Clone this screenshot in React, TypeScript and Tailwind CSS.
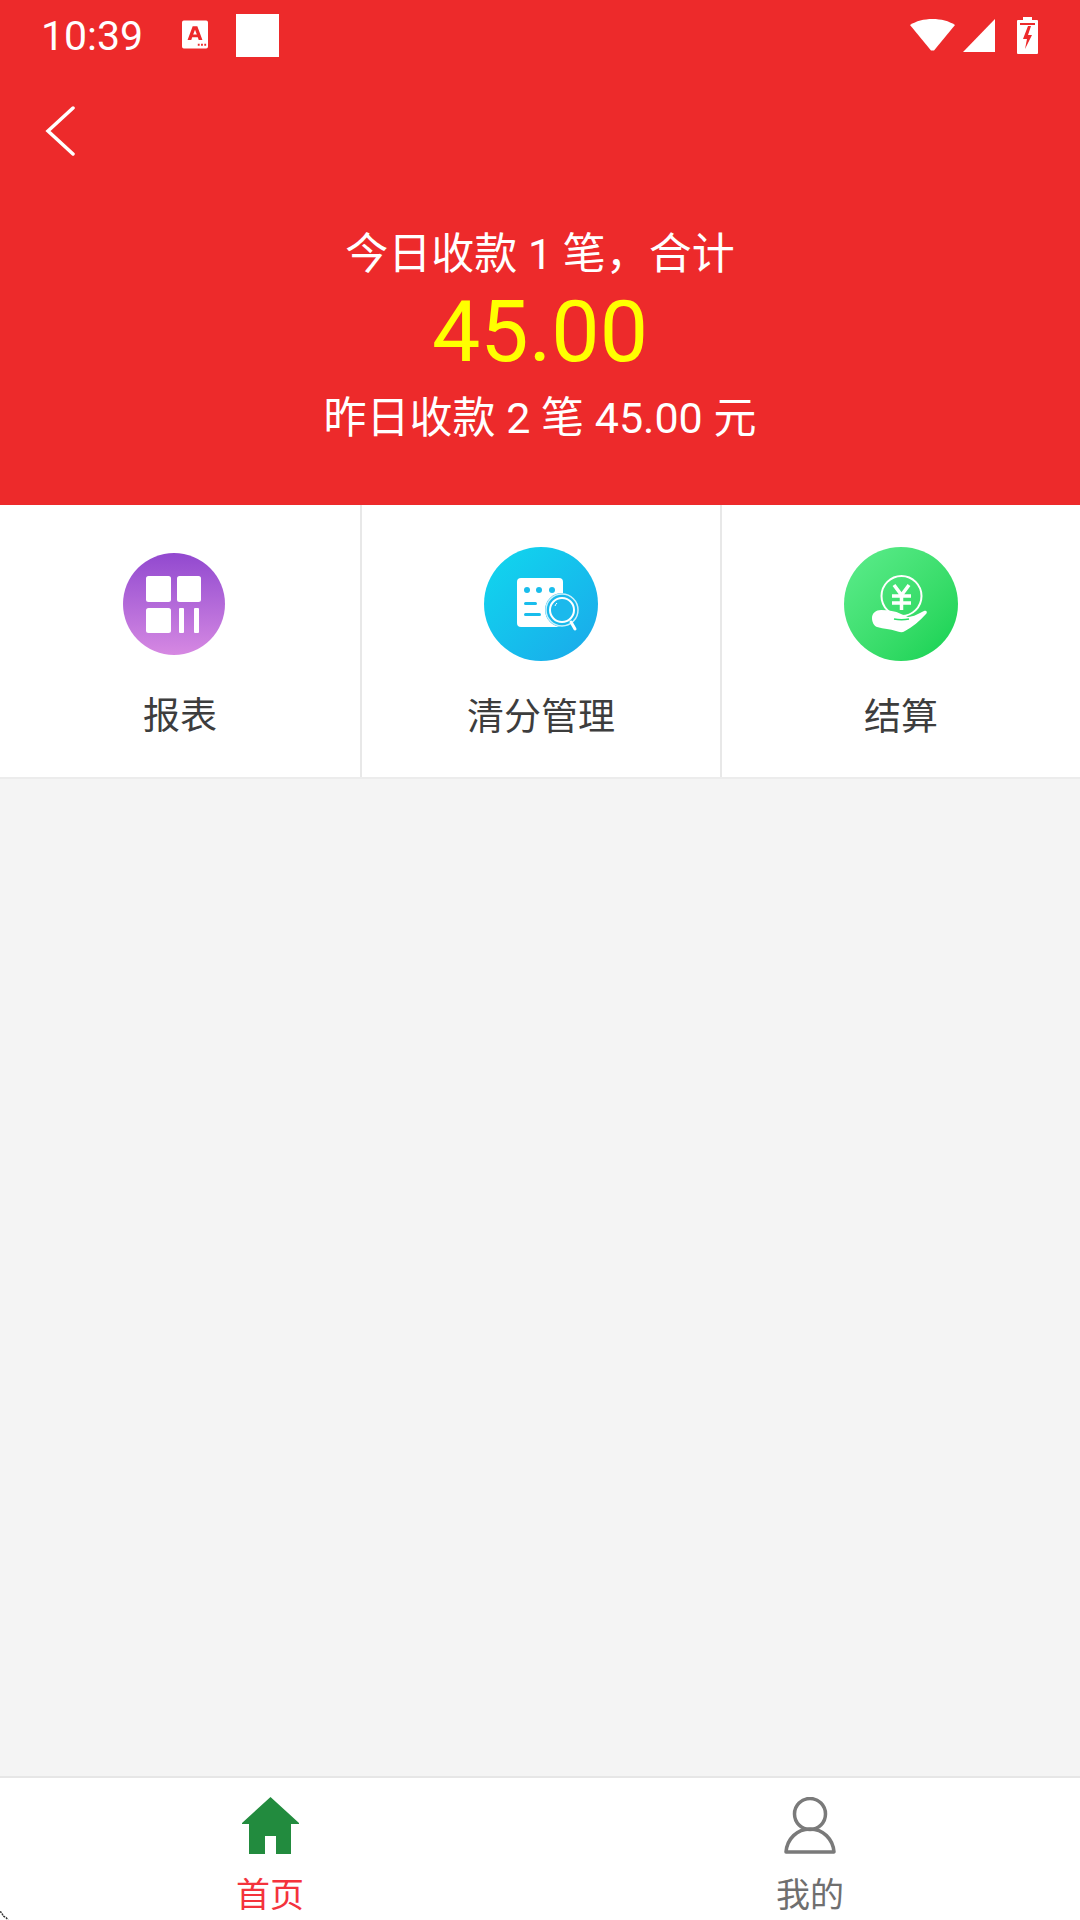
const font = { fontFamily: 'Roboto, "Noto Sans CJK SC", sans-serif' };

function StatusBar() {
  return (
    <div className="flex h-[70px] items-center pl-[41px] pr-[42px] text-white">
      <span className="mt-[2px] w-[141px] text-[41px] leading-none">10:39</span>
      <svg className="mb-[2px]" width="26" height="29" viewBox="0 0 28 30">
        <path fillRule="evenodd" fill="#fff" d="M2 0h24a2 2 0 0 1 2 2v26a2 2 0 0 1-2 2H2a2 2 0 0 1-2-2V2a2 2 0 0 1 2-2zM11.500 6 6 21h4l1-3h6l1 3h4L16.500 6zM14 10l2 5h-4zM17 25v2h2v-2zM20.500 25v2h2v-2zM24 25v2h2v-2z" />
      </svg>
      <div className="ml-[28px] h-[43px] w-[43px] bg-white" />
      <div className="flex-1" />
      <svg width="45" height="32" viewBox="0 0 45 32">
        <path fill="#fff" d="M0 6C6 2 14 0 22.500 0S39 2 45 6L24 31.500h-3z" />
      </svg>
      <svg className="ml-[8px]" width="32" height="33" viewBox="0 0 32 33">
        <path fill="#fff" d="M32 0v33H0z" />
      </svg>
      <svg className="ml-[22px]" width="21" height="37" viewBox="0 0 21 37">
        <path fillRule="evenodd" fill="#fff" d="M6 0h9v3h5a1 1 0 0 1 1 1v32a1 1 0 0 1-1 1H1a1 1 0 0 1-1-1V4a1 1 0 0 1 1-1h5zM3 6v2h15V6zM11 9 6 22h4l-2 10 7-14h-4l3-9z" />
      </svg>
    </div>
  );
}

function ReportIcon() {
  return (
    <div className="mr-[13px] flex h-[102px] w-[102px] items-center justify-center rounded-full bg-gradient-to-b from-[#9248cf] to-[#d688e2]">
      <svg width="55" height="57" viewBox="0 0 55 57" fill="#fff">
        <rect x="0" y="0" width="25" height="26" rx="2.500" />
        <rect x="31" y="0" width="24" height="26" rx="2.500" />
        <rect x="0" y="32" width="25" height="25" rx="2.500" />
        <rect x="33" y="32" width="5" height="25" rx="1" />
        <rect x="48" y="32" width="5" height="25" rx="1" />
      </svg>
    </div>
  );
}

function SearchIcon() {
  return (
    <div className="flex h-[114px] w-[114px] items-center justify-center rounded-full bg-gradient-to-br from-[#11d8ee] to-[#1ba8ea]">
      <svg width="114" height="114" viewBox="0 0 114 114">
        <rect x="33" y="31" width="46" height="49" rx="4" fill="#fff" />
        <circle cx="43" cy="43" r="3" fill="#19bdec" />
        <circle cx="55" cy="43" r="3" fill="#19bdec" />
        <circle cx="68" cy="43" r="3" fill="#19bdec" />
        <rect x="40" y="55" width="13" height="3" rx="1.500" fill="#19bdec" />
        <rect x="40" y="66" width="17" height="3" rx="1.500" fill="#19bdec" />
        <circle cx="78" cy="63" r="17" fill="#1bb9ec" />
        <circle cx="78" cy="63" r="16" fill="none" stroke="#cdf1fb" strokeWidth="1.500" />
        <circle cx="78" cy="63" r="12" fill="none" stroke="#fff" strokeWidth="2" />
        <path d="M71 59a8 8 0 0 1 2-3" fill="none" stroke="#fff" strokeWidth="1" />
        <path d="M87 75l4 7" stroke="#fff" strokeWidth="3" strokeLinecap="round" />
      </svg>
    </div>
  );
}

function MoneyIcon() {
  return (
    <div className="flex h-[114px] w-[114px] items-center justify-center rounded-full bg-gradient-to-br from-[#5ced8c] to-[#0bd150]">
      <svg width="114" height="114" viewBox="0 0 114 114">
        <circle cx="57.500" cy="49" r="20" fill="none" stroke="#fff" strokeWidth="2" />
        <path d="M50 38l7.500 10L65 38M57.500 48v15M48 49h19M48 56h19" fill="none" stroke="#fff" strokeWidth="3.500" />
        <path fill="#fff" d="M28 71c0-5 4-8 9-8 8 0 14 1 20 4l7 3c5 0 12-4 16-6 2-1 4 1 2 3-6 7-14 13-21 17-3 2-6 1-9 0-6-2-12-2-19-4-3-1-5-5-5-9z" />
        <path d="M50 72c5 1 10 1 15 0" fill="none" stroke="#2adf68" strokeWidth="1.500" />
      </svg>
    </div>
  );
}

const cells = [
  { label: "报表", icon: <ReportIcon />, cls: "w-[362px] border-r-2 pt-[48px]", gap: "mt-[37px]" },
  { label: "清分管理", icon: <SearchIcon />, cls: "w-[360px] border-r-2 pt-[42px]", gap: "mt-[32px]" },
  { label: "结算", icon: <MoneyIcon />, cls: "flex-1 pt-[42px]", gap: "mt-[32px]" },
];

export default function App() {
  return (
    <div className="relative flex h-[1920px] w-[1080px] flex-col bg-[#f4f4f4]" style={font}>
      <header className="flex h-[505px] flex-col bg-[#ed2a2b] text-white">
        <StatusBar />
        <svg className="ml-[45px] mt-[36px]" width="32" height="50" viewBox="0 0 32 50">
          <path d="M28 2 3 25l25 23" fill="none" stroke="#fff" strokeWidth="3.500" strokeLinecap="round" />
        </svg>
        <div className="mt-[73px] flex flex-col items-center">
          <p className="text-[43px] leading-[50px]">今日收款 1 笔，合计</p>
          <p className="mt-[3px] text-[86px] leading-[100px] text-[#ffff00]">45.00</p>
          <p className="mt-[11px] text-[43px] leading-[50px]">昨日收款 2 笔 45.00 元</p>
        </div>
      </header>

      <section className="flex h-[274px] border-b-2 border-[#ececec] bg-white">
        {cells.map((c) => (
          <div key={c.label} className={`flex flex-col items-center border-[#e8e8e8] ${c.cls}`}>
            {c.icon}
            <span className={`${c.gap} text-[37px] leading-[50px] text-[#3d3d3d]`}>{c.label}</span>
          </div>
        ))}
      </section>

      <main className="flex-1" />

      <nav className="flex h-[144px] border-t-2 border-[#e6e6e6] bg-white">
        <div className="flex flex-1 flex-col items-center pt-[19px]">
          <svg width="57" height="57" viewBox="0 0 57 57">
            <path fill="#228b3e" d="M28.500 0 57 26v1H49v30H34V39H23v18H7V27H0v-1z" />
          </svg>
          <span className="mt-[18px] text-[34px] leading-[46px] text-[#f4333c]">首页</span>
        </div>
        <div className="flex flex-1 flex-col items-center pt-[19px]">
          <svg width="52" height="57" viewBox="0 0 52 57" fill="none" stroke="#7a7a7a" strokeWidth="3.500">
            <circle cx="26" cy="17" r="15.500" />
            <path d="M2 55c1-13 11-23 24-23s23 10 24 23z" strokeLinejoin="round" />
          </svg>
          <span className="mt-[18px] text-[34px] leading-[46px] text-[#6f6f6f]">我的</span>
        </div>
      </nav>

      <svg className="absolute bottom-0 left-0" width="9" height="10" viewBox="0 0 9 10">
        <path d="M0 1.500 2 3l1 3 3 1.500 2 2.500" fill="none" stroke="#333" strokeWidth="1.500" strokeDasharray="2 1" />
      </svg>
    </div>
  );
}
